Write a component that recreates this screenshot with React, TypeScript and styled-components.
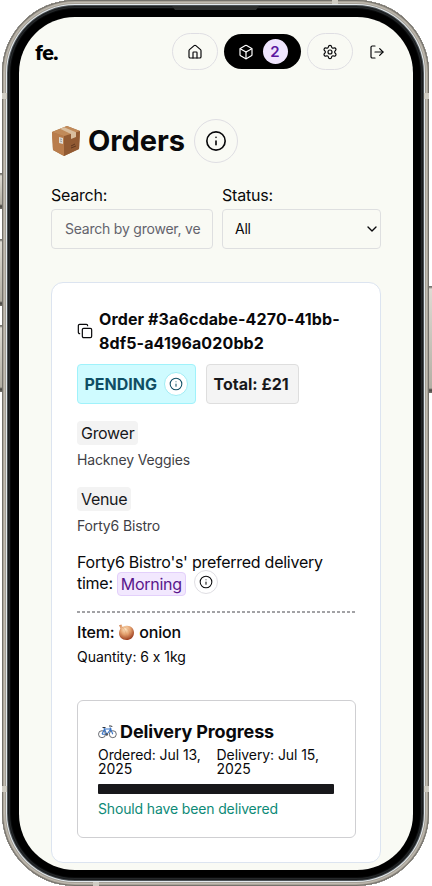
import React from 'react';
import styled, { createGlobalStyle } from 'styled-components';
import { House, Box, Settings, LogOut, Info, Copy, ChevronDown } from 'lucide-react';

const GlobalStyle = createGlobalStyle`
  *, *::before, *::after { box-sizing: border-box; }
  body { margin: 0; background: #fff; font-family: Inter, sans-serif; font-feature-settings: "calt" 0; color: #09090b; overflow: hidden; }
  h1, h2, h3, p { margin: 0; }
  button { font: inherit; color: inherit; padding: 0; background: none; }
`;

const Stage = styled.div`
  position: relative;
  width: 432px;
  height: 886px;
  overflow: hidden;
  padding: 0 2px;
`;

const SideButton = styled.i<{ $side: 'left' | 'right'; $top: number; $height: number }>`
  position: absolute;
  ${p => p.$side}: 0;
  top: ${p => p.$top}px;
  height: ${p => p.$height}px;
  width: 3px;
  background: linear-gradient(#77756f 0 1px, #dedbd3 3px, #b3afa4 calc(100% - 5px), #45433f calc(100% - 3px), #77746c 100%);
`;

const Frame = styled.div`
  position: relative;
  width: 427px;
  height: 886px;
  padding: 17px 16px 16px 17px;
  border-radius: 73px;
  background: #000;
  box-shadow:
    inset 0 0 0 1px #75726c,
    inset 0 0 0 2px #aaa499,
    inset 0 0 0 3px #c0bbb1,
    inset 0 0 0 4px #a49f96,
    inset 0 0 0 5px #e3e9ed,
    inset 0 0 0 6px #4b5155,
    inset 0 0 0 7px #1b1d1f,
    inset 0 0 0 8px #25282a,
    inset 0 0 0 9px #090a0b;
`;

const Antenna = styled.i<{ $x: number; $y: number; $flat?: boolean }>`
  position: absolute;
  left: ${p => p.$x}px;
  top: ${p => p.$y}px;
  width: ${p => (p.$flat ? 6 : 5)}px;
  height: ${p => (p.$flat ? 4 : 6)}px;
  background: #cfccc3;
`;

const Speaker = styled.i`
  position: absolute;
  top: 6px;
  left: 170px;
  width: 87px;
  height: 4px;
  background: #2c2e2e;
  clip-path: polygon(0 0, 100% 0, calc(100% - 3px) 100%, 3px 100%);
`;

const Screen = styled.main`
  width: 394px;
  height: 853px;
  overflow: hidden;
  border-radius: 56px;
  background: #f9faf4;
`;

const Header = styled.header`
  display: flex;
  align-items: center;
  height: 37px;
  margin: 16px 20px 0 16px;
`;

const Logo = styled.span`
  flex: 1;
  font: 800 21.5px/30px Lato, sans-serif;
  letter-spacing: -0.5px;
  color: #000;
`;

const NavPill = styled.button<{ $active?: boolean }>`
  display: flex;
  flex: none;
  align-items: center;
  justify-content: center;
  gap: 9px;
  width: ${p => (p.$active ? 77 : 46)}px;
  height: ${p => (p.$active ? 35 : 37)}px;
  margin-right: 6px;
  border: ${p => (p.$active ? '0' : '1px solid #dfdee3')};
  border-radius: 20px;
  background: ${p => (p.$active ? '#000' : 'transparent')};
  color: ${p => (p.$active ? '#fff' : '#09090b')};
`;

const Count = styled.span`
  width: 25px;
  height: 25px;
  border-radius: 50%;
  background: #efe5fd;
  color: #5b17a0;
  font: 600 15px/25px Inter, sans-serif;
`;

const LogoutButton = styled.button`
  display: flex;
  width: 24px;
  margin-left: 10px;
  border: 0;
`;

const Content = styled.section`
  padding: 48px 32px 0;
`;

const TitleRow = styled.div`
  display: flex;
  align-items: center;
  height: 45px;
`;

const Title = styled.h1`
  margin: 0 9px 0 7px;
  font-size: 29px;
  line-height: 36px;
  font-weight: 700;
  letter-spacing: 0;
`;

const InfoCircle = styled.button<{ $size: number; $tone?: string }>`
  display: inline-flex;
  flex: none;
  align-items: center;
  justify-content: center;
  width: ${p => p.$size}px;
  height: ${p => p.$size}px;
  border: 1px solid ${p => p.$tone ?? '#dfdee3'};
  border-radius: 50%;
`;

const Filters = styled.div`
  display: grid;
  grid-template-columns: 162px 159px;
  gap: 9px;
  margin-top: 22px;
`;

const Field = styled.label`
  font-size: 16px;
  line-height: 20px;
  letter-spacing: -0.22px;
`;

const Control = styled.span<{ $muted?: boolean }>`
  display: flex;
  align-items: center;
  justify-content: space-between;
  height: 40px;
  margin-top: 4px;
  padding: 0 0 0 ${p => (p.$muted ? 13 : 12)}px;
  border: 1px solid #dedfe0;
  border-radius: 4px;
  overflow: hidden;
  white-space: nowrap;
  font-size: 14px;
  color: ${p => (p.$muted ? '#63636c' : '#09090b')};
`;

const Card = styled.article`
  height: 581px;
  margin: 33px 0 0;
  padding: 24px 24px 0 25px;
  border: 1px solid #dce4f0;
  border-radius: 12px;
  background: #fff;
`;

const OrderHeading = styled.div`
  display: flex;
  align-items: center;
  gap: 6px;
`;

const OrderId = styled.h2`
  font-size: 16px;
  line-height: 24px;
  font-weight: 700;
  letter-spacing: 0.12px;
  white-space: nowrap;
`;

const Badges = styled.div`
  display: flex;
  gap: 10px;
  margin: 9px 0 0 -0.5px;
`;

const Badge = styled.div<{ $kind: 'status' | 'total' }>`
  display: flex;
  align-items: center;
  justify-content: space-between;
  width: ${p => (p.$kind === 'status' ? 119 : 93)}px;
  height: 40px;
  padding: 0 7px;
  border: 1px solid ${p => (p.$kind === 'status' ? '#a0f2fb' : '#dedede')};
  border-radius: 4px;
  background: ${p => (p.$kind === 'status' ? '#cffbff' : '#f4f4f4')};
  color: ${p => (p.$kind === 'status' ? '#104e64' : '#18181b')};
  font-size: 16px;
  font-weight: 700;
  letter-spacing: 0;
  white-space: nowrap;
  ${InfoCircle} { background: #fff; }
`;

const Party = styled.section`
  margin-top: 17px;
`;

const Tag = styled.h3`
  width: fit-content;
  height: 24px;
  padding: 0 4px;
  border-radius: 4px;
  background: #f3f3f3;
  font-size: 16px;
  line-height: 25px;
  font-weight: 400;
  letter-spacing: -0.3px;
  color: #18181b;
`;

const PartyName = styled.p`
  margin-top: 5px;
  font-size: 14px;
  line-height: 20px;
  letter-spacing: -0.15px;
  color: #3f3f46;
`;

const Preference = styled.p`
  margin-top: 16px;
  font-size: 16px;
  line-height: 21px;
  letter-spacing: -0.26px;
  white-space: nowrap;
`;

const PreferenceTime = styled.span`
  display: flex;
  align-items: center;
  height: 21px;

  ${InfoCircle} { margin-bottom: 3px; }
`;

const Slot = styled.span`
  height: 24px;
  margin: 0 8px 0 4px;
  padding: 0 3px;
  border: 1px solid #e3d0fb;
  border-radius: 4px;
  background: #f2e8fe;
  color: #59168b;
  line-height: 23px;
`;

const Divider = styled.div`
  height: 2px;
  margin-top: 17px;
  background: repeating-linear-gradient(90deg, #a2a2a5 0 3px, #fff 3px 5px);
`;

const Item = styled.h3`
  display: flex;
  align-items: center;
  gap: 4px;
  margin-top: 8px;
  font-size: 16px;
  line-height: 22px;
  font-weight: 500;
  letter-spacing: -0.2px;
`;

const Quantity = styled.p`
  margin-top: 4px;
  font-size: 14px;
  line-height: 20px;
  letter-spacing: -0.05px;
`;

const Progress = styled.section`
  height: 138px;
  margin-top: 33px;
  padding: 20px 20px 0;
  border: 1px solid #cfcfd2;
  border-radius: 6px;
`;

const ProgressTitle = styled.h3`
  display: flex;
  align-items: center;
  gap: 3px;
  font-size: 18px;
  line-height: 22px;
  font-weight: 700;
  letter-spacing: -0.12px;
  white-space: nowrap;
`;

const Dates = styled.div`
  display: grid;
  grid-template-columns: 118.5px 117px;
  margin-top: 5px;
  font-size: 14px;
  line-height: 14px;
  letter-spacing: -0.07px;
`;

const Track = styled.div`
  width: 236px;
  height: 10px;
  margin-top: 8px;
  border-radius: 1px;
  background: #18181b;
`;

const DeliveryStatus = styled.p`
  margin-top: 5px;
  font-size: 14px;
  line-height: 20px;
  letter-spacing: -0.14px;
  color: #0d8a77;
`;

const PackageIcon = () => (
  <svg width="30" height="32" viewBox="0 0 30 32">
    <path d="M1 7 16 1 29 6 28 24 13 31 2 25Z" fill="#a66e40" />
    <path d="M1 7 13 11 13 31 2 25Z" fill="#b97c4b" />
    <path d="M13 11 29 6 28 24 13 31Z" fill="#925a32" />
    <path d="M1 7 16 1 29 6 13 11Z" fill="#c18a59" />
    <path d="M9 3.8 13 2.2 25 7.2 25 12 20 14 20 9Z" fill="#d9bd9d" />
    <path d="m8 12 4 1v6l-4-1Z" fill="#dddcd5" />
    <path d="m9 14 2 .5M9 16l2 .5" stroke="#82828a" strokeWidth=".7" />
    <path d="m20 21 4-2m-4 4 5-2" stroke="#5f371f" strokeWidth="1" />
  </svg>
);

const OnionIcon = () => (
  <svg width="17" height="17" viewBox="0 0 17 17">
    <defs>
      <radialGradient id="onion" cx=".42" cy=".3" r=".7">
        <stop stopColor="#ffe5c0" />
        <stop offset=".5" stopColor="#e3a06e" />
        <stop offset="1" stopColor="#9c3e20" />
      </radialGradient>
    </defs>
    <path d="M1 1.2 3.5.6 4.5 3C11-.5 16 3.500 16 8.500c0 5-3.500 7.500-7.500 7.500C4 16 1 13 1 9c0-2 .7-3.500 1.500-4.600Z" fill="url(#onion)" />
    <path d="M3 3c-1 4 0 9 4 12M4 3c3 2 5 7 4 12M5 3c5 0 8 5 6 11" fill="none" stroke="#c67a4c" strokeWidth=".25" />
  </svg>
);

const BikeIcon = () => (
  <svg width="19" height="14" viewBox="0 0 19 14" fill="none">
    <circle cx="4" cy="9.200" r="3.500" stroke="#454950" strokeWidth=".8" />
    <circle cx="14.800" cy="9.200" r="3.500" stroke="#454950" strokeWidth=".8" />
    <path d="M4 9.200 6.500 4h6.300l-4 5.500L6 3m-2 6.200h4.800M12 2.500l2.800 6.700" stroke="#3974c6" strokeWidth="1.100" />
    <path d="M4.500 2.500h3M11 1h2.500l.6 1" stroke="#34373c" />
    <circle cx="8.800" cy="9.500" r="1.200" fill="#555" />
  </svg>
);

export default function App() {
  return (
    <>
      <GlobalStyle />
      <Stage>
        <SideButton $side="left" $top={173} $height={36} />
        <SideButton $side="left" $top={239} $height={67} />
        <SideButton $side="left" $top={325} $height={67} />
        <SideButton $side="right" $top={286} $height={107} />
        <Frame>
          <Antenna $x={0} $y={93} />
          <Antenna $x={422} $y={93} />
          <Antenna $x={0} $y={786} />
          <Antenna $x={422} $y={786} />
          <Antenna $x={330} $y={0} $flat />
          <Antenna $x={91} $y={882} $flat />
          <Speaker />
          <Screen>
            <Header>
              <Logo>fe.</Logo>
              <NavPill aria-label="Home"><House size={16} strokeWidth={1.8} /></NavPill>
              <NavPill $active aria-label="Orders"><Box size={16} strokeWidth={1.8} /><Count>2</Count></NavPill>
              <NavPill aria-label="Settings"><Settings size={16} strokeWidth={1.8} /></NavPill>
              <LogoutButton aria-label="Log out"><LogOut size={16} strokeWidth={1.8} /></LogoutButton>
            </Header>
            <Content>
              <TitleRow>
                <PackageIcon />
                <Title>Orders</Title>
                <InfoCircle $size={44}><Info size={22} strokeWidth={1.8} /></InfoCircle>
              </TitleRow>
              <Filters>
                <Field>Search:<Control $muted>Search by grower, ve</Control></Field>
                <Field>Status:<Control>All<ChevronDown size={16} strokeWidth={2} /></Control></Field>
              </Filters>
              <Card>
                <OrderHeading>
                  <Copy size={16} strokeWidth={1.8} />
                  <OrderId>Order #3a6cdabe-4270-41bb-<br />8df5-a4196a020bb2</OrderId>
                </OrderHeading>
                <Badges>
                  <Badge $kind="status">PENDING<InfoCircle $size={24} $tone="#a0edf5"><Info size={14} strokeWidth={1.8} /></InfoCircle></Badge>
                  <Badge $kind="total">Total: £21</Badge>
                </Badges>
                <Party><Tag>Grower</Tag><PartyName>Hackney Veggies</PartyName></Party>
                <Party><Tag>Venue</Tag><PartyName>Forty6 Bistro</PartyName></Party>
                <Preference>
                  Forty6 Bistro's' preferred delivery
                  <PreferenceTime>time:<Slot>Morning</Slot><InfoCircle $size={24}><Info size={14} strokeWidth={1.8} /></InfoCircle></PreferenceTime>
                </Preference>
                <Divider />
                <Item>Item: <OnionIcon /> onion</Item>
                <Quantity>Quantity: 6 x 1kg</Quantity>
                <Progress>
                  <ProgressTitle><BikeIcon />Delivery Progress</ProgressTitle>
                  <Dates><span>Ordered: Jul 13, 2025</span><span>Delivery: Jul 15, 2025</span></Dates>
                  <Track />
                  <DeliveryStatus>Should have been delivered</DeliveryStatus>
                </Progress>
              </Card>
            </Content>
          </Screen>
        </Frame>
      </Stage>
    </>
  );
}
